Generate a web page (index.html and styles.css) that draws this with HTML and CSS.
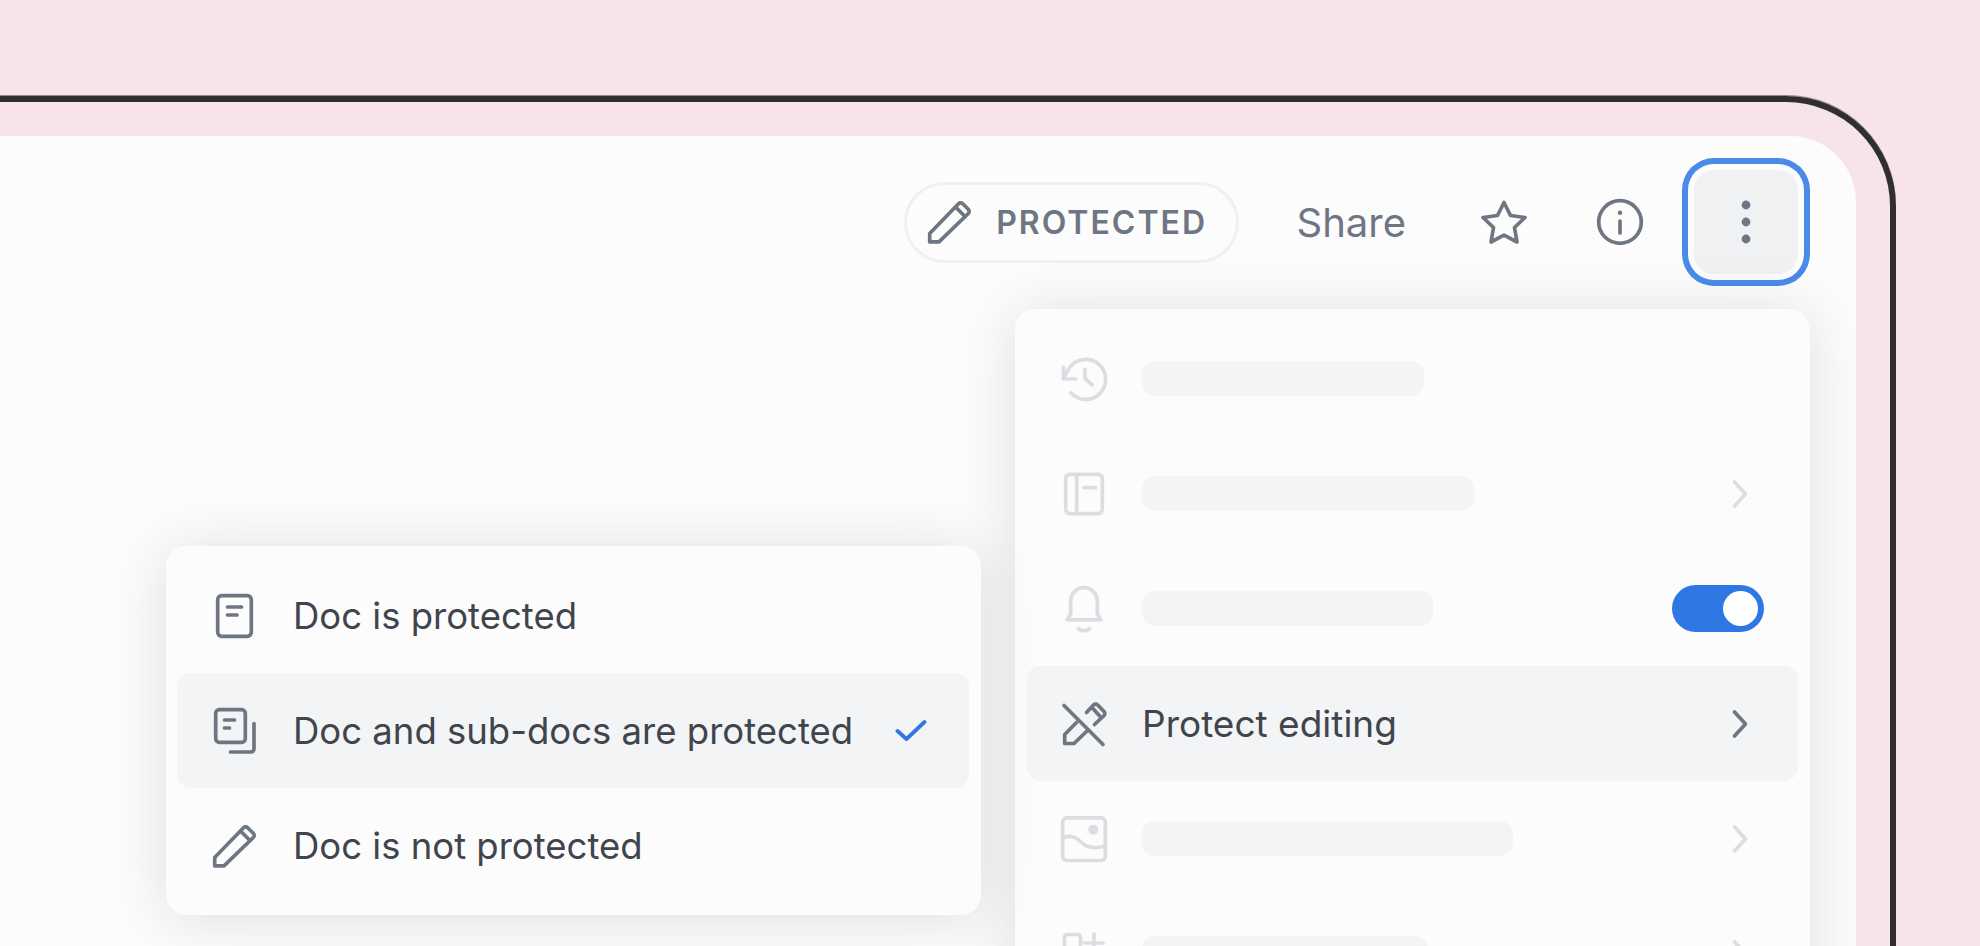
FILE: index.html
```html
<!DOCTYPE html>
<html lang="en">
<head>
  <meta charset="UTF-8">
  <meta name="viewport" content="width=device-width, initial-scale=1.0">
  <title>Protect editing menu</title>
  <link rel="stylesheet" href="styles.css">
</head>
<body>
  <div class="device-frame">
    <div class="doc-panel">
      <div class="doc-header">
        <div class="status-pill">
          <svg class="icon" viewBox="0 0 48 48"><path d="M3.7 43.8V35.5L32.5 5.7a3 3 0 0 1 4.2 0L42.3 11.3a3 3 0 0 1 0 4.2L13 43.8Z"/><path d="M30.5 10L39 18.5"/></svg>
          <span class="status-label">PROTECTED</span>
        </div>
        <div class="share-link">Share</div>
        <div class="icon-button">
          <svg class="icon" viewBox="0 0 48 48"><path d="M24 4.5L30.5 17.5L45 19.5L34.5 29.5L37 44L24 37.2L11 44L13.5 29.5L3 19.5L17.5 17.5Z"/></svg>
        </div>
        <div class="icon-button">
          <svg class="icon" viewBox="0 0 48 48"><circle cx="24" cy="24" r="21.3"/><path d="M24 23V35"/><circle class="dot" cx="24" cy="14.7" r="2.2"/></svg>
        </div>
        <div class="icon-button is-active">
          <svg class="icon" viewBox="0 0 48 48"><circle class="dot" cx="24" cy="7" r="4.4"/><circle class="dot" cx="24" cy="24" r="4.4"/><circle class="dot" cx="24" cy="41" r="4.4"/></svg>
        </div>
      </div>

      <div class="options-menu">
        <div class="menu-row is-faded">
          <svg class="icon" viewBox="0 0 48 48"><path d="M11 38A20 20 0 1 0 10 12L4 22"/><path d="M3.5 12V24H15.5"/><path d="M25 14.5V23.5L32.3 30"/></svg>
          <div class="bar bar-history"></div>
        </div>
        <div class="menu-row is-faded">
          <svg class="icon" viewBox="0 0 48 48"><rect x="5.7" y="4.4" width="36.6" height="39.2" rx="4"/><path d="M16.7 4.4V43.6"/><path d="M24 17.7H35.5"/></svg>
          <div class="bar bar-book"></div>
          <svg class="icon row-end" viewBox="0 0 48 48"><path d="M18.5 12L29.5 24L18.5 36"/></svg>
        </div>
        <div class="menu-row is-faded">
          <svg class="icon" viewBox="0 0 48 48"><path d="M7 34.8C8 33 10.7 30.5 10.7 28V16a13.3 13.3 0 0 1 26.6 0V28C37.3 30.5 40 33 41 34.8Z"/><path d="M18.5 43.5C20.5 46.5 27.5 46.5 29.5 43.5"/></svg>
          <div class="bar bar-bell"></div>
          <div class="toggle row-end"><div class="toggle-knob"></div></div>
        </div>
        <div class="menu-row is-hovered">
          <svg class="icon" viewBox="0 0 48 48"><path d="M26.5 12.5L33.5 5a3 3 0 0 1 4.2 0L44 11.5a3 3 0 0 1 0 4.2L34.5 24.5"/><path d="M16.5 22.5L4.7 34.5V43.5H14L28 30"/><path d="M4 5.5L43 44.5"/><path d="M32.5 8L40.5 17"/></svg>
          <div class="row-label">Protect editing</div>
          <svg class="icon row-end" viewBox="0 0 48 48"><path d="M18.5 12L29.5 24L18.5 36"/></svg>
        </div>
        <div class="menu-row is-faded">
          <svg class="icon" viewBox="0 0 48 48"><rect x="2.7" y="2.9" width="42.6" height="42.6" rx="4"/><circle class="dot" cx="33.3" cy="14.8" r="5"/><path d="M3 23C10 19.5 16 22 21 27S34 34.5 45 31"/></svg>
          <div class="bar bar-image"></div>
          <svg class="icon row-end" viewBox="0 0 48 48"><path d="M18.5 12L29.5 24L18.5 36"/></svg>
        </div>
        <div class="menu-row is-faded">
          <svg class="icon" viewBox="0 0 48 48"><rect x="4.5" y="4.5" width="16" height="16" rx="3"/><path d="M34 4V22"/><path d="M25 13H43"/></svg>
          <div class="bar bar-apps"></div>
          <svg class="icon row-end" viewBox="0 0 48 48"><path d="M18.5 12L29.5 24L18.5 36"/></svg>
        </div>
      </div>

      <div class="scope-menu">
        <div class="menu-row">
          <svg class="icon" viewBox="0 0 48 48"><rect x="6.7" y="3.7" width="33.6" height="40.6" rx="4"/><path d="M16.5 15H30.5"/><path d="M16.5 23H26"/></svg>
          <div class="row-label">Doc is protected</div>
        </div>
        <div class="menu-row is-hovered">
          <svg class="icon" viewBox="0 0 48 48"><rect x="4.7" y="2.7" width="29.6" height="32.6" rx="3.5"/><path d="M13.5 13H23.5"/><path d="M13.5 21H18.5"/><path d="M43 16.5V42a3 3 0 0 1-3 3H19.5"/></svg>
          <div class="row-label">Doc and sub-docs are protected</div>
          <svg class="check row-end" viewBox="0 0 32 24"><path d="M2.5 12L11.5 20L29.5 3"/></svg>
        </div>
        <div class="menu-row">
          <svg class="icon" viewBox="0 0 48 48"><path d="M3.7 43.8V35.5L32.5 5.7a3 3 0 0 1 4.2 0L42.3 11.3a3 3 0 0 1 0 4.2L13 43.8Z"/><path d="M30.5 10L39 18.5"/></svg>
          <div class="row-label">Doc is not protected</div>
        </div>
      </div>
    </div>
  </div>
</body>
</html>
```

FILE: styles.css
```css
* {
  margin: 0;
  padding: 0;
  box-sizing: border-box;
  font-family: Inter, 'Liberation Sans', sans-serif;
}

body {
  background-color: #f7e4ea;
  height: 100vh;
  overflow: hidden;
  padding-top: 96px;
}

.device-frame {
  width: 1896px;
  height: 100%;
  padding: 34px 34px 0 0;
  border-top: 6px solid #2f2f2f;
  border-right: 6px solid #2f2f2f;
  border-top-right-radius: 110px;
  box-shadow: 0 -1px 0 rgba(47, 47, 47, 0.5);
}

.doc-panel {
  position: relative;
  height: 100%;
  overflow: hidden;
  background-color: #fcfcfc;
  border-top-right-radius: 66px;
}

.doc-header {
  display: flex;
  justify-content: flex-end;
  align-items: center;
  gap: 12px;
  padding: 34px 58px 0 0;
}

/* all svg icons are stroked on a 48 box */
.icon {
  flex: none;
  width: 48px;
  height: 48px;
  fill: none;
  stroke: #6f7683;
  stroke-width: 3.7;
  stroke-linecap: round;
  stroke-linejoin: round;
}

.icon .dot {
  fill: #6f7683;
  stroke: none;
}

.status-pill {
  display: flex;
  align-items: center;
  gap: 22px;
  height: 81px;
  padding: 0 28.5px 0 19px;
  border: 3px solid #f0f0f2;
  border-radius: 41px;
}

.status-label {
  color: #6f7683;
  font-size: 32px;
  font-weight: 600;
  letter-spacing: 2px;
}

.share-link {
  margin: 0 34px 0 46px;
  color: #6f7683;
  font-size: 40px;
}

.icon-button {
  display: flex;
  justify-content: center;
  align-items: center;
  width: 104px;
  height: 104px;
  border-radius: 20px;
}

.icon-button.is-active {
  margin-left: 10px;
  background-color: #f0f1f3;
  box-shadow: 0 0 0 6px #fcfcfc, 0 0 0 12px #4a8bea;
}

.options-menu,
.scope-menu {
  position: absolute;
  padding: 12px;
  background-color: #fcfcfc;
  border-radius: 20px;
  box-shadow: 0 4px 60px rgba(0, 0, 0, 0.12);
}

.options-menu {
  top: 173px;
  right: 46px;
  width: 795px;
}

.scope-menu {
  top: 410px;
  left: 166px;
  width: 815px;
  padding-left: 11px;
}

.menu-row {
  display: flex;
  align-items: center;
  gap: 34px;
  height: 115px;
  padding: 0 34px 0 33px;
  border-radius: 14px;
}

.scope-menu .menu-row {
  gap: 34px;
  padding-left: 34px;
}

.menu-row.is-hovered {
  background-color: #f3f4f6;
}

.menu-row.is-faded .icon {
  stroke: #dcdde2;
}

.menu-row.is-faded .icon .dot {
  fill: #dcdde2;
  stroke: none;
}

.row-label {
  color: #3f444d;
  font-size: 36.5px;
}

.options-menu .row-label {
  font-size: 37px;
}

.row-end {
  margin-left: auto;
}

.bar {
  height: 35px;
  background-color: #f3f4f6;
  border-radius: 13px;
}

.bar-history { width: 282px; }
.bar-book { width: 332px; }
.bar-bell { width: 291px; }
.bar-image { width: 371px; }
.bar-apps { width: 286px; }

.toggle {
  display: flex;
  justify-content: flex-end;
  align-items: center;
  width: 92px;
  height: 47px;
  padding-right: 6px;
  background-color: #2f78e4;
  border-radius: 24px;
}

.toggle-knob {
  width: 35px;
  height: 35px;
  background-color: #ffffff;
  border-radius: 50%;
}

.check {
  flex: none;
  width: 32px;
  height: 24px;
  margin-right: 8px;
  fill: none;
  stroke: #2f78e4;
  stroke-width: 3.8;
  stroke-linecap: round;
  stroke-linejoin: round;
}
```
